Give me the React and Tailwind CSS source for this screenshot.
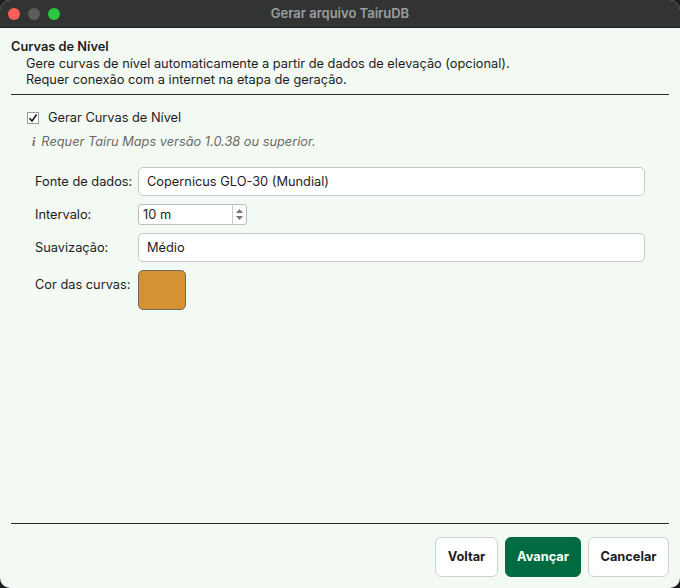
import { useState } from 'react';

export default function App() {
  const [enabled, setEnabled] = useState(true);

  return (
    <div className="w-[680px] h-[588px] bg-[#1c1d1c] font-['Inter','Liberation_Sans',Arial,sans-serif] text-[12.8px] text-[#1d1d1d]">
      <div className="w-full h-full rounded-[10px] overflow-hidden flex flex-col bg-[#f3f9f3]">
        {/* Title bar */}
        <div className="h-[28px] bg-[#323434] border-b border-[#1f1f1f] flex items-center relative shrink-0">
          <div className="flex items-center gap-[8px] pl-[8px]">
            <span className="w-[12px] h-[12px] rounded-full bg-[#fe5f57]" />
            <span className="w-[12px] h-[12px] rounded-full bg-[#5b5d5d]" />
            <span className="w-[12px] h-[12px] rounded-full bg-[#29c840]" />
          </div>
          <div className="absolute inset-0 flex items-center justify-center text-[13px] font-semibold text-[#9c9e9e] pointer-events-none">
            Gerar arquivo TairuDB
          </div>
        </div>

        {/* Header */}
        <div className="px-[11px] pt-[11px]">
          <div className="font-semibold leading-[16px]">Curvas de Nível</div>
          <div className="pl-[15px] leading-[16px] mt-[1px]">
            <div>Gere curvas de nível automaticamente a partir de dados de elevação (opcional).</div>
            <div>Requer conexão com a internet na etapa de geração.</div>
          </div>
          <div className="h-px bg-[#2a2a2a] mt-[6px]" />
        </div>

        {/* Content */}
        <div className="flex-1 px-[27px] pt-[13px]">
          <label className="flex items-center gap-[9px] cursor-pointer">
            <span
              onClick={() => setEnabled(!enabled)}
              className="w-[12px] h-[12px] border border-[#9a9a9a] bg-white flex items-center justify-center"
            >
              {enabled && (
                <svg width="10" height="10" viewBox="0 0 10 10">
                  <path d="M1.5 5.2 L4 8 L8.6 1.5" fill="none" stroke="#111" strokeWidth="1.5" />
                </svg>
              )}
            </span>
            <span>Gerar Curvas de Nível</span>
          </label>

          <div className="flex items-center gap-[6px] mt-[5px] pl-[5px] text-[#6a6a6a] italic">
            <span className="font-['Liberation_Serif',serif] font-bold text-[12px]">i</span>
            <span>Requer Tairu Maps versão 1.0.38 ou superior.</span>
          </div>

          <div className="grid grid-cols-[103px_507px] items-center gap-y-[8px] mt-[16px] pl-[8px]">
            <div>Fonte de dados:</div>
            <div className="h-[29px] bg-white border border-[#c3cdc5] rounded-[5px] flex items-center px-[8px]">
              Copernicus GLO-30 (Mundial)
            </div>

            <div>Intervalo:</div>
            <div className="w-[109px] h-[21px] bg-white border border-[#b9c0bb] rounded-[3px] flex items-center">
              <span className="flex-1 pl-[4px]">10 m</span>
              <div className="w-[14px] h-full border-l border-[#c9cfcb] flex flex-col items-center justify-center gap-[3px]">
                <svg width="7" height="4" viewBox="0 0 7 4"><path d="M0 4 L3.5 0 L7 4 Z" fill="#777" /></svg>
                <svg width="7" height="4" viewBox="0 0 7 4"><path d="M0 0 L3.5 4 L7 0 Z" fill="#777" /></svg>
              </div>
            </div>

            <div>Suavização:</div>
            <div className="h-[29px] bg-white border border-[#c3cdc5] rounded-[5px] flex items-center px-[8px]">
              Médio
            </div>

            <div className="self-start pt-[5px]">Cor das curvas:</div>
            <div className="w-[48px] h-[40px] rounded-[5px] bg-[#d59232] border border-[#6f6a5c]" />
          </div>
        </div>

        {/* Footer */}
        <div className="px-[11px] pb-[11px]">
          <div className="h-px bg-[#2a2a2a]" />
          <div className="flex justify-end gap-[7px] mt-[13px]">
            <button className="h-[40px] w-[63px] bg-white border border-[#ccd3cd] rounded-[6px] font-bold">
              Voltar
            </button>
            <button className="h-[40px] w-[76px] bg-[#006b40] text-white border border-[#006b40] rounded-[6px] font-bold">
              Avançar
            </button>
            <button className="h-[40px] w-[81px] bg-white border border-[#ccd3cd] rounded-[6px] font-bold">
              Cancelar
            </button>
          </div>
        </div>
      </div>
    </div>
  );
}
